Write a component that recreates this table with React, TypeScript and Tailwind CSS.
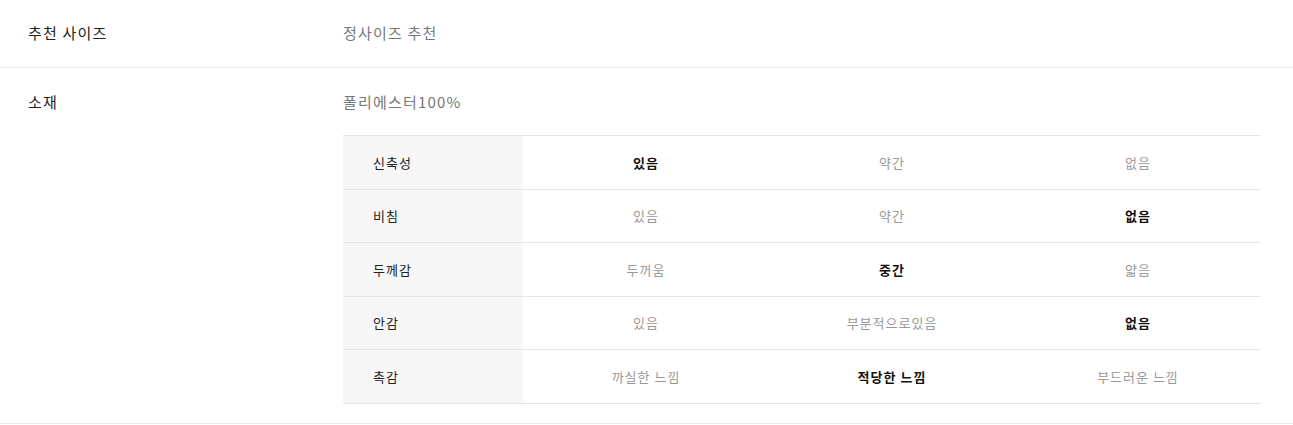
import React from "react";

const rows = [
  { label: "신축성", values: ["있음", "약간", "없음"], active: 0 },
  { label: "비침", values: ["있음", "약간", "없음"], active: 2 },
  { label: "두께감", values: ["두꺼움", "중간", "얇음"], active: 1 },
  { label: "안감", values: ["있음", "부분적으로있음", "없음"], active: 2 },
  { label: "촉감", values: ["까실한 느낌", "적당한 느낌", "부드러운 느낌"], active: 1 },
];

export default function App() {
  return (
    <div className="bg-white w-[1293px] font-['Noto_Sans_CJK_KR','Noto_Sans',sans-serif] text-[#222]">
      <div className="flex h-[68px] items-center border-b border-[#ebebeb] pb-[1px]">
        <div className="w-[343px] pl-[28px] text-[15px] leading-[20px] tracking-[1.2px] text-[#222]">추천 사이즈</div>
        <div className="text-[15px] leading-[20px] tracking-[1.2px] text-[#777]">정사이즈 추천</div>
      </div>

      <div className="flex pt-[24px] pb-[19px] border-b border-[#ebebeb]">
        <div className="w-[343px] shrink-0 pl-[28px] text-[15px] leading-[20px] tracking-[1.2px] text-[#222]">소재</div>
        <div className="flex flex-col">
          <div className="text-[15px] leading-[20px] tracking-[1.2px] text-[#777]">폴리에스터100%</div>
          <div className="mt-[23px] w-[918px] border-t border-[#e5e5e5]">
            {rows.map((row) => (
              <div key={row.label} className="flex h-[53.6px] border-b border-[#e5e5e5] text-[13px] tracking-[1px]">
                <div className="w-[180px] shrink-0 bg-[#f7f7f7] pl-[30px] flex items-center text-[#222]">
                  {row.label}
                </div>
                {row.values.map((v, i) => (
                  <div
                    key={i}
                    className={
                      i === row.active
                        ? "flex-1 flex items-center justify-center font-bold text-[#111]"
                        : "flex-1 flex items-center justify-center text-[#999]"
                    }
                  >
                    {v}
                  </div>
                ))}
              </div>
            ))}
          </div>
        </div>
      </div>
    </div>
  );
}
